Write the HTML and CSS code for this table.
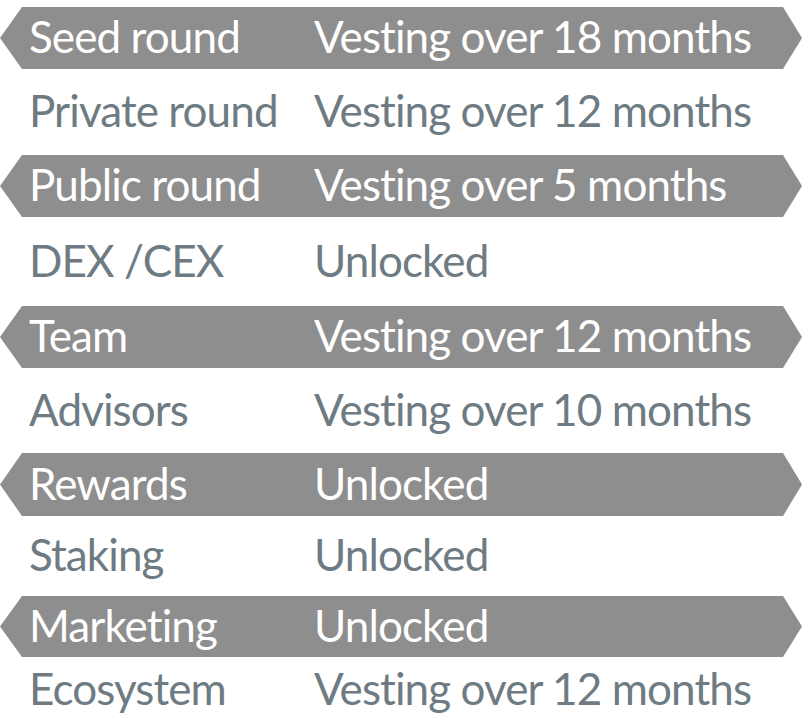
FILE: index.html
```html
<!DOCTYPE html>
<html>
<head>
<meta charset="utf-8">
<link rel="stylesheet" href="styles.css">
</head>
<body>
<div class="table">
  <div class="row band"><span class="label">Seed round</span><span class="value">Vesting over 18 months</span></div>
  <div class="row"><span class="label">Private round</span><span class="value">Vesting over 12 months</span></div>
  <div class="row band"><span class="label">Public round</span><span class="value">Vesting over 5 months</span></div>
  <div class="row"><span class="label">DEX /CEX</span><span class="value">Unlocked</span></div>
  <div class="row band"><span class="label">Team</span><span class="value">Vesting over 12 months</span></div>
  <div class="row"><span class="label">Advisors</span><span class="value">Vesting over 10 months</span></div>
  <div class="row band"><span class="label">Rewards</span><span class="value">Unlocked</span></div>
  <div class="row"><span class="label">Staking</span><span class="value">Unlocked</span></div>
  <div class="row band"><span class="label">Marketing</span><span class="value">Unlocked</span></div>
  <div class="row"><span class="label">Ecosystem</span><span class="value">Vesting over 12 months</span></div>
</div>
</body>
</html>
```

FILE: styles.css
```css
html, body {
  margin: 0;
  padding: 0;
  background: #ffffff;
  overflow: hidden;
}

.table {
  display: grid;
  grid-template-rows: 62px 86px 62px 89px 62px 85px 63px 80px 61px 66px;
  padding-top: 7px;
  width: 802px;
  font-family: "Lato", "Liberation Sans", sans-serif;
  font-size: 44px;
  letter-spacing: -0.9px;
  font-variant-ligatures: none;
  color: #6e7b82;
}

.row {
  display: flex;
  align-items: center;
  padding-left: 29px;
  padding-bottom: 4px;
  box-sizing: border-box;
  white-space: nowrap;
}

.band {
  background: #8e8e8e;
  color: #ffffff;
  clip-path: polygon(22px 0, 783px 0, 802px 50%, 783px 100%, 22px 100%, 0 50%);
}

.label {
  width: 285px;
  flex: none;
}

.value {
  flex: none;
}
```
